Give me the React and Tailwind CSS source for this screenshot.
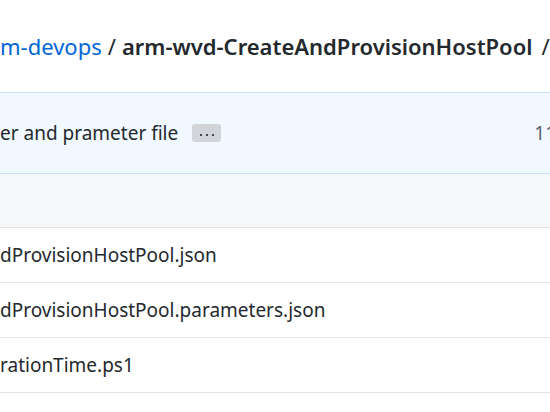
export default function App() {
  const files = [
    "dProvisionHostPool.json",
    "dProvisionHostPool.parameters.json",
    "rationTime.ps1",
  ];

  return (
    <div className="h-[412px] w-[550px] overflow-hidden bg-white text-[#24292e] font-['Noto_Sans',sans-serif]">
      <div className="flex h-[92px] items-center whitespace-nowrap text-[22px]">
        <span className="text-[#0366d6]">m-devops</span>
        <span className="mx-[6px]">/</span>
        <span className="font-semibold">arm-wvd-CreateAndProvisionHostPool</span>
        <span className="ml-[9px]">/</span>
      </div>

      <div className="flex h-[82px] items-center border-y border-[#c8e1ff] bg-[#f1f8ff] text-[19px] whitespace-nowrap">
        <span>er and prameter file</span>
        <span className="ml-[14px] flex h-[18px] w-[29px] items-end justify-center gap-[4px] rounded-[3px] bg-[#d1d5da] pb-[6px]">
          <span className="h-[2px] w-[2px] bg-[#444d56]" />
          <span className="h-[2px] w-[2px] bg-[#444d56]" />
          <span className="h-[2px] w-[2px] bg-[#444d56]" />
        </span>
        <span className="ml-auto -mr-[88px] text-[#586069]">11 commits</span>
      </div>

      <div className="h-[54px] border-b border-[#e1e4e8] bg-[#f6f8fa]" />

      {files.map((name) => (
        <div
          key={name}
          className="flex h-[55px] items-center border-b border-[#e1e4e8] text-[19px] whitespace-nowrap"
        >
          <span>{name}</span>
        </div>
      ))}
    </div>
  );
}
